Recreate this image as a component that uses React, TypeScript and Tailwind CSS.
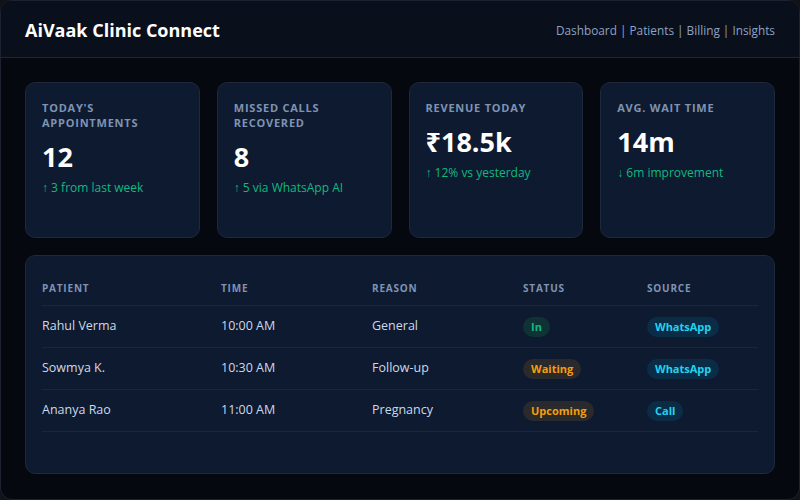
import React from "react";

const stats = [
  { label: "Today's Appointments", value: "12", sub: "↑ 3 from last week" },
  { label: "Missed Calls Recovered", value: "8", sub: "↑ 5 via WhatsApp AI" },
  { label: "Revenue Today", value: "₹18.5k", sub: "↑ 12% vs yesterday" },
  { label: "Avg. Wait Time", value: "14m", sub: "↓ 6m improvement" },
];

type Row = { name: string; time: string; reason: string; status: "In" | "Waiting" | "Upcoming"; source: string };
const rows: Row[] = [
  { name: "Rahul Verma", time: "10:00 AM", reason: "General", status: "In", source: "WhatsApp" },
  { name: "Sowmya K.", time: "10:30 AM", reason: "Follow-up", status: "Waiting", source: "WhatsApp" },
  { name: "Ananya Rao", time: "11:00 AM", reason: "Pregnancy", status: "Upcoming", source: "Call" },
];

function StatusBadge({ s }: { s: Row["status"] }) {
  if (s === "In")
    return <span className="inline-block rounded-full bg-[#0f3334] px-2 py-[3px] text-[11px] font-bold leading-[14px] text-[#10b981]">In</span>;
  return <span className="inline-block rounded-full bg-[#2a2a2c] px-2 py-[3px] text-[11px] font-bold leading-[14px] text-[#f59e0b]">{s}</span>;
}

export default function App() {
  return (
    <div className="h-[500px] w-[800px] bg-[#111318]" style={{ fontFamily: '"Open Sans", "Noto Sans", sans-serif' }}>
      <div className="flex h-full w-full flex-col overflow-hidden rounded-[12px] border border-[#1c2230] bg-[#05080f]">
        <header className="flex h-[57px] items-center justify-between border-b border-[#1e2533] bg-[#0a0f1c] px-6 pt-[3px]">
          <h1 className="text-[18px] font-bold text-white">AiVaak Clinic Connect</h1>
          <nav className="text-[11.8px] text-[#8ea3c4]">Dashboard | Patients | Billing | Insights</nav>
        </header>
        <main className="flex flex-col gap-[17px] px-6 pt-6">
          <div className="grid grid-cols-4 gap-[17px]">
            {stats.map((s) => (
              <div key={s.label} className="h-[156px] rounded-[10px] border border-[#1e293b] bg-[#0e1a2f] px-4 pt-[17px]">
                <div className="text-[11px] font-bold uppercase leading-[15px] tracking-[0.07em] text-[#7f93b3]">{s.label}</div>
                <div className="mt-[10px] text-[27px] font-bold leading-[34px] text-white">{s.value}</div>
                <div className="mt-[6px] text-[12px] leading-4 text-[#10b981]">{s.sub}</div>
              </div>
            ))}
          </div>
          <div className="h-[219px] rounded-[10px] border border-[#1e293b] bg-[#0e1a2f] px-4 pt-[24px]">
            <table className="w-full border-collapse text-left">
              <thead>
                <tr className="border-b border-[#1b2638]">
                  {["Patient", "Time", "Reason", "Status", "Source"].map((h, i) => (
                    <th
                      key={h}
                      className={`pb-[9px] text-[10px] font-bold uppercase leading-4 tracking-[0.08em] text-[#7f93b3] ${
                        ["w-[179px]", "w-[151px]", "w-[151px]", "w-[124px]", ""][i]
                      }`}
                    >
                      {h}
                    </th>
                  ))}
                </tr>
              </thead>
              <tbody>
                {rows.map((r) => (
                  <tr key={r.name} className="h-[42px] border-b border-[#1b2638] text-[12.5px] text-[#cdd8ea]">
                    <td>{r.name}</td>
                    <td>{r.time}</td>
                    <td>{r.reason}</td>
                    <td>
                      <StatusBadge s={r.status} />
                    </td>
                    <td>
                      <span className="inline-block rounded-full bg-[#0b2c47] px-2 py-[3px] text-[11px] font-bold leading-[14px] text-[#22d3ee]">
                        {r.source}
                      </span>
                    </td>
                  </tr>
                ))}
              </tbody>
            </table>
          </div>
        </main>
      </div>
    </div>
  );
}
